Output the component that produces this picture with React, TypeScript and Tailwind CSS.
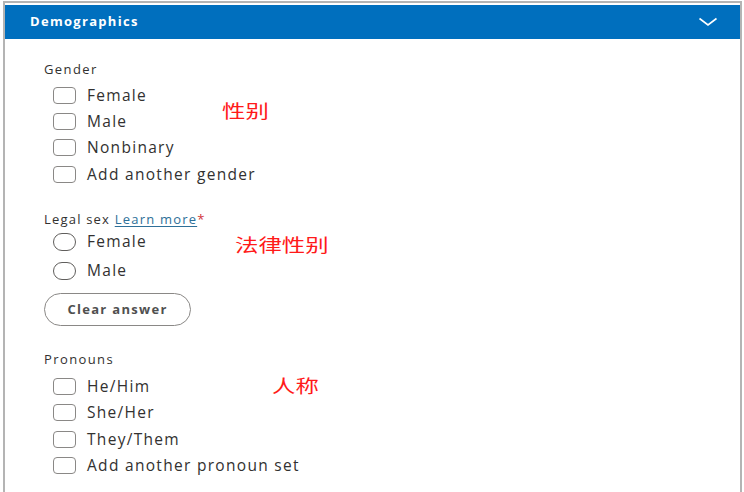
import { ReactNode } from 'react';

const font = { fontFamily: '"Open Sans", "Noto Sans CJK SC", sans-serif' };

const Checkbox = ({ label }: { label: string }) => (
  <label className="flex items-center h-[26.33px] gap-[11px]">
    <span className="w-[23px] h-[17px] rounded-[4px] border border-[#8a8886] bg-white shrink-0" />
    <span className="text-[15.5px] tracking-[1.3px] text-[#323130]">{label}</span>
  </label>
);

const Radio = ({ label }: { label: string }) => (
  <label className="flex items-center h-[29px] gap-[11px]">
    <span className="w-[23px] h-[18px] rounded-full border border-[#605e5c] bg-white shrink-0" />
    <span className="text-[15.5px] tracking-[1.3px] text-[#323130]">{label}</span>
  </label>
);

const Note = ({ children, className }: { children: ReactNode; className: string }) => (
  <span className={`absolute origin-left scale-x-[1.3] text-[18px] leading-[20px] text-[#ff1a1a] ${className}`}>{children}</span>
);

export default function App() {
  return (
    <div className="w-[744px] h-[492px] bg-white overflow-hidden" style={font}>
      <div className="mt-[1px] ml-[3px] w-[739px] h-[491px] border-t-2 border-l-2 border-r-2 border-[#b4b4b4] pt-[2px]">
        {/* Header */}
        <div className="h-[34px] bg-[#006fbe] flex items-center justify-between pl-[25px] pr-[22px]">
          <span className="text-white font-bold text-[13px] tracking-[1.3px]">Demographics</span>
          <svg width="20" height="10" viewBox="0 0 20 10" fill="none">
            <path d="M1.5 1.5 L10 8 L18.5 1.5" stroke="white" strokeWidth="1.6" />
          </svg>
        </div>

        {/* Body */}
        <div className="relative pl-[39px] pt-[22px]">
          <Note className="left-[217px] top-[62px]">性别</Note>
          <Note className="left-[230px] top-[196px]">法律性别</Note>
          <Note className="left-[267px] top-[337px]">人称</Note>

          <div className="text-[13px] text-[#323130] tracking-[1.4px] h-[16px] leading-[16px]">Gender</div>
          <div className="pl-[9px] pt-[5px] flex flex-col">
            <Checkbox label="Female" />
            <Checkbox label="Male" />
            <Checkbox label="Nonbinary" />
            <Checkbox label="Add another gender" />
          </div>

          <div className="mt-[24px] text-[13px] text-[#323130] tracking-[1.2px] h-[16px] leading-[16px]">
            Legal sex{' '}
            <a className="text-[#2e6f98] underline underline-offset-2">Learn more</a>
            <span className="text-[#d13438]">*</span>
          </div>
          <div className="pl-[9px] flex flex-col">
            <Radio label="Female" />
            <Radio label="Male" />
          </div>

          <button className="mt-[8px] w-[147px] h-[33px] rounded-full border border-[#8a8886] text-[13px] font-bold text-[#505050] tracking-[1.3px]">
            Clear answer
          </button>

          <div className="mt-[25px] text-[13px] text-[#323130] tracking-[1.4px] h-[16px] leading-[16px]">Pronouns</div>
          <div className="pl-[9px] pt-[6px] flex flex-col">
            <Checkbox label="He/Him" />
            <Checkbox label="She/Her" />
            <Checkbox label="They/Them" />
            <Checkbox label="Add another pronoun set" />
          </div>
        </div>
      </div>
    </div>
  );
}
